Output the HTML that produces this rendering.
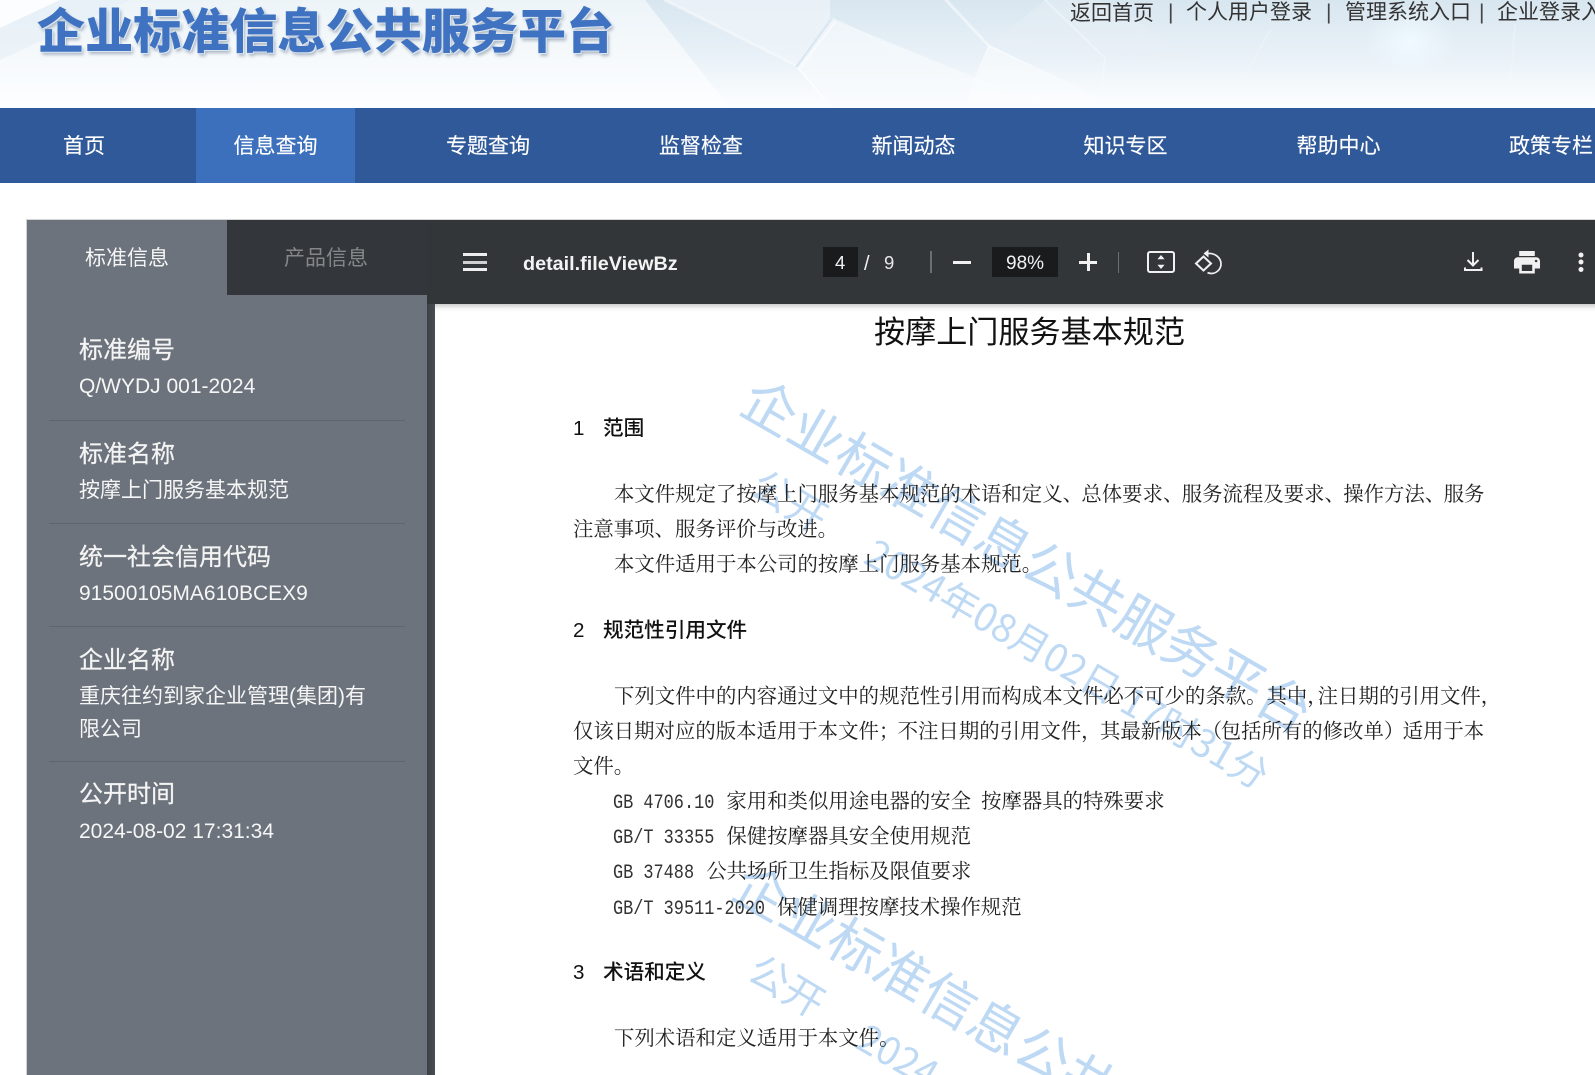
<!DOCTYPE html>
<html lang="zh-CN"><head><meta charset="utf-8"><title>企业标准信息公共服务平台</title>
<style>
html,body{margin:0;padding:0;background:#fff;width:1595px;height:1075px;overflow:hidden}
#root{position:relative;width:1595px;height:1075px;overflow:hidden;font-family:"Liberation Sans","Noto Sans CJK SC",sans-serif}
.a{position:absolute}
.t{position:absolute;white-space:nowrap;line-height:1}
.nav{font-size:21px;color:#fff;top:136px;transform:translateX(-50%);-webkit-text-stroke:.15px #fff}
.top{font-size:21px;color:#333;top:2px}
.h{font-size:24px;color:#f4f4f4;left:79px;-webkit-text-stroke:.25px #f4f4f4}
.v{font-size:21px;color:#f6f6f6;left:79px}
.ln{position:absolute;left:49px;width:356px;height:1px;background:#5d6570}
.p{position:absolute;white-space:nowrap;line-height:1;font:20.4px/1 "Noto Serif CJK SC",serif;color:#222;left:573px}
.i{left:614px}
.b{font-family:"Noto Sans CJK SC",sans-serif;font-weight:500;color:#111;font-size:20.6px}
.n{display:inline-block;width:30px;font-family:"Liberation Sans",sans-serif;font-weight:400}
.m{display:inline-block;font-family:"Liberation Mono",monospace;font-size:20.26px;color:#333;transform:scaleX(.834);transform-origin:0 50%}
.c{letter-spacing:-1.6px}
.d{letter-spacing:-10px}
</style></head><body><div id="root">

<svg class="a" style="left:0;top:0" width="1595" height="108" viewBox="0 0 1595 108">
<defs>
<linearGradient id="hb" x1="0" y1="0" x2="0" y2="1"><stop offset="0" stop-color="#d8e6f0"/><stop offset=".55" stop-color="#eaf2f8"/><stop offset="1" stop-color="#fdfeff"/></linearGradient>
<linearGradient id="hw" x1="0" y1="0" x2="0" y2="1"><stop offset="0" stop-color="#edf4f8"/><stop offset="1" stop-color="#fdfeff"/></linearGradient>
<radialGradient id="gl"><stop offset="0" stop-color="#f0fbff" stop-opacity=".95"/><stop offset="1" stop-color="#eef8fd" stop-opacity="0"/></radialGradient>
</defs>
<rect width="1595" height="108" fill="url(#hb)"/>
<polygon points="0,0 645,0 730,108 0,108" fill="url(#hw)"/>
<polygon points="0,0 60,0 0,28" fill="#fbfdfe"/>
<polygon points="60,0 130,0 0,60 0,28" fill="#e4eff6" opacity=".6"/>
<polygon points="665,0 830,0 830,18 795,65" fill="#f0f5f9" opacity=".7"/>
<polygon points="795,65 830,18 1050,108 830,108" fill="#f8fbfd" opacity=".65"/>
<polygon points="990,45 1100,100 1090,108 965,108" fill="#fbfdfe" opacity=".5"/>
<polygon points="1045,0 1100,0 1200,60 990,45" fill="#e8f0f6" opacity=".4"/>
<g fill="none" stroke-linecap="round">
<path d="M665 0L795 65" stroke="#f6fafc" stroke-width="3" opacity=".6"/>
<path d="M797 66L832 18" stroke="#dbe8f2" stroke-width="2.500"/>
<path d="M800 68L835 22" stroke="#fff" stroke-width="1.500" opacity=".6"/>
<path d="M798 68L832 108" stroke="#fff" stroke-width="2" opacity=".6"/>
<path d="M832 18L975 88" stroke="#f5f9fc" stroke-width="2" opacity=".4"/>
<path d="M946 0L988 45" stroke="#f6fafc" stroke-width="3" opacity=".65"/>
<path d="M989 46L970 92" stroke="#fbfdff" stroke-width="2" opacity=".6"/>
<path d="M989 46L1105 100" stroke="#fbfdff" stroke-width="2" opacity=".5"/>
<path d="M1045 0L1105 58" stroke="#f4f9fc" stroke-width="2" opacity=".5"/>
<path d="M1105 58L1100 100" stroke="#fbfdff" stroke-width="1.500" opacity=".4"/>
<path d="M1270 30L1240 85" stroke="#f4f9fc" stroke-width="2" opacity=".35"/>
<path d="M1515 25L1510 90" stroke="#f4f9fc" stroke-width="2" opacity=".35"/>
</g>
<ellipse cx="1410" cy="42" rx="46" ry="38" fill="url(#gl)"/>
</svg>

<div class="t" style="left:37px;top:3px;font-size:48px;letter-spacing:.1px;font-weight:900;color:#3f72c0;font-family:'Noto Sans CJK SC',sans-serif;text-shadow:1px 1px 0 #dbe7f3,2px 3px 3px rgba(60,80,110,.4)">企业标准信息公共服务平台</div>

<div class="t top" style="left:1070px;font-family:'Noto Sans CJK SC',sans-serif">返回首页</div>
<div class="t top" style="left:1168px;color:#444">|</div>
<div class="t top" style="left:1186px">个人用户登录</div>
<div class="t top" style="left:1326px;color:#444">|</div>
<div class="t top" style="left:1345px">管理系统入口</div>
<div class="t top" style="left:1479px;color:#444">|</div>
<div class="t top" style="left:1497px">企业登录入口</div>

<div class="a" style="left:0;top:108px;width:1595px;height:75px;background:#30599a"></div>
<div class="a" style="left:196px;top:108px;width:159px;height:75px;background:#3c70bd"></div>
<div class="t nav" style="left:84px">首页</div>
<div class="t nav" style="left:275.5px">信息查询</div>
<div class="t nav" style="left:488px">专题查询</div>
<div class="t nav" style="left:701px">监督检查</div>
<div class="t nav" style="left:913.500px">新闻动态</div>
<div class="t nav" style="left:1125.500px">知识专区</div>
<div class="t nav" style="left:1338.500px">帮助中心</div>
<div class="t nav" style="left:1551px">政策专栏</div>

<!-- viewer frame -->
<div class="a" style="left:26px;top:219px;width:1569px;height:1px;background:#d5d5d5"></div>
<div class="a" style="left:26px;top:219px;width:1px;height:856px;background:#d0d0d0"></div>
<div class="a" style="left:27px;top:220px;width:400px;height:855px;background:#6c737c"></div>
<div class="a" style="left:227px;top:220px;width:200px;height:75px;background:#33363a"></div>
<div class="a" style="left:427px;top:220px;width:8px;height:855px;background:linear-gradient(90deg,#3c4044,#4a4e52)"></div>
<div class="a" style="left:435px;top:304px;width:1160px;height:771px;background:#fff"></div>
<div class="a" style="left:427px;top:220px;width:1168px;height:84px;background:#323639"></div>
<div class="a" style="left:435px;top:304px;width:1160px;height:8px;background:linear-gradient(#cfcfcf,#f6f6f6 60%,#fff)"></div>

<div class="t" style="left:85px;top:248px;font-size:21px;color:#f5f5f5">标准信息</div>
<div class="t" style="left:284px;top:248px;font-size:21px;color:#84878a">产品信息</div>

<div class="t h" style="top:339px">标准编号</div>
<div class="t v" style="top:376px">Q/WYDJ 001-2024</div>
<div class="ln" style="top:420px"></div>
<div class="t h" style="top:443px">标准名称</div>
<div class="t v" style="top:480px">按摩上门服务基本规范</div>
<div class="ln" style="top:523px"></div>
<div class="t h" style="top:546px">统一社会信用代码</div>
<div class="t v" style="top:583px">91500105MA610BCEX9</div>
<div class="ln" style="top:626px"></div>
<div class="t h" style="top:649px">企业名称</div>
<div class="t v" style="top:686px">重庆往约到家企业管理(集团)有</div>
<div class="t v" style="top:719px">限公司</div>
<div class="ln" style="top:761px"></div>
<div class="t h" style="top:783px">公开时间</div>
<div class="t v" style="top:821px">2024-08-02 17:31:34</div>

<!-- toolbar -->
<div class="a" style="left:463px;top:253px;width:24px;height:3px;background:#eee"></div>
<div class="a" style="left:463px;top:261px;width:24px;height:3px;background:#d0d0d0"></div>
<div class="a" style="left:463px;top:268px;width:24px;height:3px;background:#eee"></div>
<div class="t" style="left:523px;top:255px;font-size:19.800px;font-weight:700;color:#f3f3f3">detail.fileViewBz</div>
<div class="a" style="left:823px;top:247px;width:35px;height:30px;background:#191b1c"></div>
<div class="t" style="left:835px;top:254px;font-size:18.500px;color:#f1f1f1">4</div>
<div class="t" style="left:864px;top:254px;font-size:20px;color:#f1f1f1">/</div>
<div class="t" style="left:884px;top:254px;font-size:18.500px;color:#e8e8e8">9</div>
<div class="a" style="left:930px;top:251px;width:2px;height:22px;background:#6c6f71"></div>
<div class="a" style="left:953px;top:261px;width:18px;height:2.500px;background:#f1f1f1"></div>
<div class="a" style="left:992px;top:247px;width:66px;height:30px;background:#191b1c"></div>
<div class="t" style="left:1006px;top:254px;font-size:19px;color:#f1f1f1">98%</div>
<div class="a" style="left:1079px;top:261px;width:18px;height:2.500px;background:#f1f1f1"></div>
<div class="a" style="left:1087px;top:253px;width:2.500px;height:18px;background:#f1f1f1"></div>
<div class="a" style="left:1118px;top:252px;width:1px;height:21px;background:#6c6f71"></div>

<svg class="a" style="left:1140px;top:240px" width="455" height="44" viewBox="1140 240 455 44">
<rect x="1148" y="252" width="26" height="20" rx="2" fill="none" stroke="#f1f1f1" stroke-width="2"/>
<path d="M1161 255l3.600 4.200h-7.200zM1161 269l3.600-4.200h-7.200z" fill="#f1f1f1"/>
<g fill="none" stroke="#f1f1f1">
<path d="M1203.500 256.500L1211 263.500l-7.500 7L1196 263.500z" stroke-width="2"/>
<path d="M1208 253.500c7.500-.5 13 4.500 13 10.500c0 5.500-5 9.500-9.500 9.500c-1.500 0-2.800-.3-4-.8" stroke-width="1.700"/>
</g>
<path d="M1208.500 249.500v8l-5-4z" fill="#f1f1f1"/>
<g fill="none" stroke="#f1f1f1" stroke-width="2">
<path d="M1473 252v13M1467.500 260l5.500 5.500 5.500-5.500"/>
<path d="M1465 267.500v2.500h16.500v-2.500"/>
</g>
<path transform="translate(1511.400 247.300) scale(1.3 1.25)" fill="#f1f1f1" d="M19 8H5c-1.660 0-3 1.340-3 3v6h4v4h12v-4h4v-6c0-1.660-1.340-3-3-3zm-3 11H8v-5h8v5zm3-7c-.55 0-1-.45-1-1s.45-1 1-1 1 .45 1 1-.45 1-1 1zm-1-9H6v4h12V3z"/>
<circle cx="1581" cy="255" r="2.500" fill="#f1f1f1"/><circle cx="1581" cy="262" r="2.500" fill="#f1f1f1"/><circle cx="1581" cy="269.500" r="2.500" fill="#f1f1f1"/>
</svg>

<!-- watermark -->
<svg class="a" style="left:435px;top:312px" width="1160" height="763" viewBox="435 312 1160 763">
<g font-family="'Noto Sans CJK SC',sans-serif" font-weight="400" fill="#a9ccf1" opacity=".75">
<text transform="translate(737 411) rotate(30)" font-size="54">企业标准信息公共服务平台</text>
<text transform="translate(748 493) rotate(31)" font-size="40">公开</text>
<text transform="translate(862 562) rotate(30)" font-size="38.500">2024年08月02日 17时31分</text>
<text transform="translate(729 896) rotate(30)" font-size="54">企业标准信息公共</text>
<text transform="translate(745 978) rotate(31)" font-size="40">公开</text>
<text transform="translate(854 1047) rotate(30)" font-size="38.500">2024</text>
</g>
</svg>

<!-- document -->
<div class="t" style="left:874px;top:314px;font-size:31.100px;color:#111;font-family:'Noto Sans CJK SC',sans-serif">按摩上门服务基本规范</div>

<div class="p b" style="top:416px"><span class="n">1</span>范围</div>
<div class="p i" style="top:483px">本文件规定了按摩上门服务基本规范的术语和定义<span class="c">、</span>总体要求<span class="c">、</span>服务流程及要求<span class="c">、</span>操作方法<span class="c">、</span>服务</div>
<div class="p" style="top:518px">注意事项、服务评价与改进。</div>
<div class="p i" style="top:553px">本文件适用于本公司的按摩上门服务基本规范。</div>
<div class="p b" style="top:618px"><span class="n">2</span>规范性引用文件</div>
<div class="p i" style="top:685px">下列文件中的内容通过文中的规范性引用而构成本文件必不可少的条款。其中<span class="d">，</span>注日期的引用文件，</div>
<div class="p" style="top:720px">仅该日期对应的版本适用于本文件<span class="c">；</span>不注日期的引用文件<span class="c">，</span>其最新版本<span class="c">（</span>包括所有的修改单<span class="c">）</span>适用于本</div>
<div class="p" style="top:755px">文件。</div>
<div class="p" style="top:790px;left:613px"><span class="m" style="width:111.400px">GB 4706.10</span><span style="margin-left:2px">家用和类似用途电器的安全</span><span style="margin-left:10px">按摩器具的特殊要求</span></div>
<div class="p" style="top:825px;left:613px"><span class="m" style="width:111.400px">GB/T 33355</span><span style="margin-left:2px">保健按摩器具安全使用规范</span></div>
<div class="p" style="top:860px;left:613px"><span class="m" style="width:91.200px">GB 37488</span><span style="margin-left:2px">公共场所卫生指标及限值要求</span></div>
<div class="p" style="top:896px;left:613px"><span class="m" style="width:162px">GB/T 39511-2020</span><span style="margin-left:2px">保健调理按摩技术操作规范</span></div>
<div class="p b" style="top:960px"><span class="n">3</span>术语和定义</div>
<div class="p i" style="top:1027px">下列术语和定义适用于本文件。</div>

</div></body></html>
